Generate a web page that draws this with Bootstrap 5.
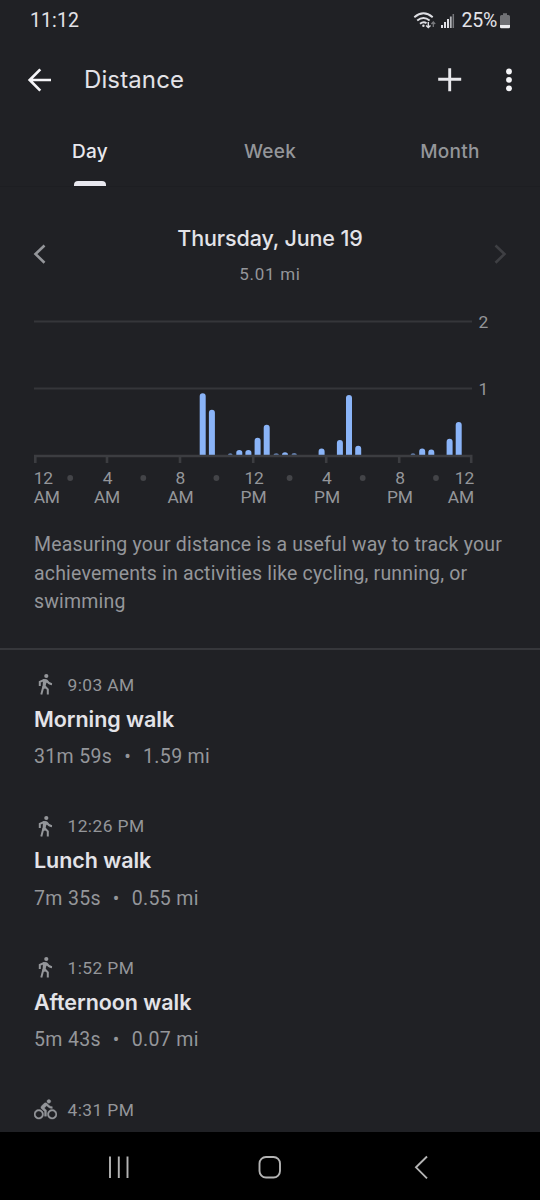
<!DOCTYPE html>
<html lang="en" data-bs-theme="dark">
<head>
<meta charset="utf-8">
<meta name="viewport" content="width=device-width, initial-scale=1">
<title>Distance</title>
<link href="https://cdn.jsdelivr.net/npm/bootstrap@5.3.0/dist/css/bootstrap.min.css" rel="stylesheet">
<style>
  body { background: #202125; color: #e3e3e8; font-family: Roboto, "Liberation Sans", sans-serif; height: 1200px; overflow: hidden; }
  svg { display: block; flex: none; }
  .gs { font-family: Inter, "Open Sans", sans-serif; white-space: nowrap; }
  .dim { color: #94969a; }
  .status-bar { height: 41px; padding: 0 29px 0 30px; font-size: 19.5px; }
  .status-time { letter-spacing: .1px; }
  .status-pct { margin-left: 4px; letter-spacing: -.2px; }
  .app-bar { height: 77px; padding: 0 24px 0 27px; }
  .app-title { font-size: 24px; letter-spacing: .12px; margin-left: 32px; line-height: 32px; }
  .tabs { height: 69px; border-bottom: 1px solid #1d1e22; }
  .tabs .nav-link { color: #94969a; font-size: 19px; font-weight: 500; padding: 21px 0 0; height: 68px; line-height: 26px; letter-spacing: .25px; }
  .tabs .nav-link.active { color: #e8e8ed; }
  .tab-mark { width: 32px; height: 5px; border-radius: 4px 4px 0 0; background: #e8e8ef; margin: 16px auto 0; }
  .day-picker { height: 123px; padding: 37px 33px 0; }
  .day-name { font-size: 21.5px; font-weight: 500; line-height: 28px; letter-spacing: -.13px; }
  .day-total { font-size: 17px; line-height: 22px; margin-top: 11px; letter-spacing: .7px; }
  .chart text { font-family: Roboto, sans-serif; font-size: 17.400px; letter-spacing: -.2px; fill: #94969a; }
  .about { font-size: 19.5px; line-height: 28.5px; letter-spacing: .18px; padding: 21px 30px 0 34px; height: 140px; border-bottom: 2px solid #36373b; white-space: nowrap; }
  .entry { height: 141.7px; padding: 22.5px 34px 0; }
  .entry-time { font-size: 17.400px; line-height: 24px; letter-spacing: .4px; }
  .entry-title { font-size: 21.5px; font-weight: 600; line-height: 28px; margin-top: 8px; letter-spacing: -.05px; }
  .entry-info { font-size: 19.5px; line-height: 26px; margin-top: 11.500px; letter-spacing: .33px; }
  .entry-list { height: 482px; overflow: hidden; }
  .entry-icon { width: 33.5px; }
  .phone-nav { height: 68px; background: #000; }
</style>
</head>
<body>
<svg width="0" height="0" class="position-absolute">
  <symbol id="walk" viewBox="0 0 23 23"><g fill="none" stroke="#94969a" stroke-width="2"><circle cx="12.300" cy="3" r="2.100" fill="#94969a" stroke="none"/><path fill="#94969a" stroke="none" d="M9 6.300q2.300-.9 4.200.2l.9 2.300-1.800 1.200-.8 3.500 1.500 1.800-4.500.6z"/><path d="M10 7 5.800 8.900v4M12.800 7.500q1.700 3.300 5.200 3.700M9.500 13 7.300 21.500M10.800 13.300l3 3v5.200"/></g></symbol>
  <symbol id="bike" viewBox="0 0 24 24"><path fill="#94969a" stroke="#94969a" stroke-width=".4" d="M15.500 5.500c1.100 0 2-.9 2-2s-.9-2-2-2-2 .9-2 2 .9 2 2 2zM5 12c-2.800 0-5 2.200-5 5s2.200 5 5 5 5-2.200 5-5-2.200-5-5-5zm0 8.500c-1.900 0-3.500-1.600-3.500-3.500s1.600-3.500 3.500-3.500 3.500 1.600 3.500 3.500-1.600 3.500-3.500 3.500zm5.800-10 2.400-2.400.8.800c1.300 1.300 3 2.100 5.100 2.100V9c-1.500 0-2.700-.6-3.600-1.500l-1.900-1.900c-.5-.4-1-.6-1.600-.6s-1.100.2-1.400.6L7.800 8.400c-.4.4-.6.9-.6 1.400 0 .6.200 1.100.6 1.400L11 14v5h2v-6.200l-2.200-2.300zM19 12c-2.800 0-5 2.200-5 5s2.200 5 5 5 5-2.200 5-5-2.200-5-5-5zm0 8.500c-1.900 0-3.500-1.600-3.500-3.500s1.600-3.500 3.500-3.500 3.500 1.600 3.500 3.500-1.600 3.500-3.500 3.500z"/></symbol>
</svg>

<div class="status-bar d-flex align-items-center">
  <span class="status-time">11:12</span>
  <svg class="ms-auto" width="44" height="24" viewBox="412 8 44 24" fill="none" stroke="#dedee3">
    <path d="M413.300 16.200q9.200-7.800 18.400 0M416.200 19.600q6.300-5.100 12.400 0M419 22.700q3.500-2.500 6.500-.5" stroke-width="1.900"/>
    <circle cx="422.400" cy="24.700" r="1.200" fill="#dedee3" stroke="none"/>
    <path d="M427.300 21v5.500m-2.200-2.100 2.200 2.200 2.200-2.200" stroke-width="1.400"/>
    <path d="M432.300 26v-5m-1.900 2 1.900-2 1.900 2" stroke="#77787c" stroke-width="1.300"/>
    <path d="M441 27v-3M444 27v-6M447 27v-9" stroke-width="2"/><path d="M449.800 27V15.500" stroke="#b4b5b9" stroke-width="1.800"/><path d="M452.300 27V13" stroke="#77787c" stroke-width="1.500"/>
  </svg>
  <span class="status-pct">25%</span>
  <svg width="12" height="18" viewBox="0 0 12 18" style="margin-left:2px"><path fill="#707175" d="M1 4.500Q1 3 2.500 3H4V1.200h4V3h1.500Q11 3 11 4.500V13H1z"/><path fill="#ededf0" d="M1 13h10v2q0 1.300-1.300 1.300H2.300Q1 16.300 1 15z"/></svg>
</div>

<header class="app-bar d-flex align-items-center">
  <svg width="25" height="26" viewBox="0 0 25 26" fill="none" stroke="#f5f5f8" stroke-width="2.700"><path d="M24 13H3M13.300 2.400 2.700 13l10.600 10.600"/></svg>
  <div class="app-title gs">Distance</div>
  <svg class="ms-auto" width="24" height="24" viewBox="0 0 24 24" stroke="#e8e8ec" stroke-width="2.900"><path d="M11.700 .3v23M.2 11.200h23"/></svg>
  <svg width="14" height="26" viewBox="0 0 14 26" fill="#f5f5f8" style="margin-left:40px"><circle cx="7" cy="4.500" r="2.900"/><circle cx="7" cy="12.800" r="2.900"/><circle cx="7" cy="21.300" r="2.900"/></svg>
</header>

<nav class="tabs nav nav-fill row g-0 text-center">
  <a class="nav-link active gs col-4">Day<div class="tab-mark"></div></a>
  <a class="nav-link gs col-4">Week</a>
  <a class="nav-link gs col-4">Month</a>
</nav>

<section class="day-picker d-flex justify-content-between">
  <svg class="mt-3" width="14" height="28" viewBox="0 0 14 28" fill="none" stroke="#94969a" stroke-width="2.600"><path d="M11.500 5.500 2.500 14l9 8.800"/></svg>
  <div class="text-center">
    <div class="day-name gs">Thursday, June 19</div>
    <div class="day-total dim">5.01 mi</div>
  </div>
  <svg class="mt-3" width="14" height="28" viewBox="0 0 14 28" fill="none" stroke="#3e3f43" stroke-width="2.600"><path d="m2.500 5.500 9 8.500-9 8.800"/></svg>
</section>

<svg class="chart" width="540" height="200" viewBox="0 310 540 200">
  <g stroke="#35363a" stroke-width="1.800"><path d="M34 321.500h438M34 388.500h438"/></g>
  <!-- half-hour bars -->
  <g fill="#8ab4f8">
    <path d="M199.700 455v-58.700a3 3 0 0 1 6 0V455zM208.900 455v-42.200a3 3 0 0 1 6 0V455z"/>
    <path d="M236.300 455v-2.500a3 2.600 0 0 1 6 0v2.500zM245.400 455v-2.500a3 2.600 0 0 1 6 0v2.500zM254.600 455v-14.200a3 3 0 0 1 6 0V455zM263.700 455v-27.200a3 3 0 0 1 6 0V455z"/>
    <path d="M318.600 455v-3.500a3 3 0 0 1 6 0v3.500zM336.900 455v-12a3 3 0 0 1 6 0v12zM346 455v-57a3 3 0 0 1 6 0v57zM355.200 455v-6.300a3 3 0 0 1 6 0v6.300z"/>
    <path d="M419.200 455v-3.500a3 3 0 0 1 6 0v3.500zM428.300 455v-2.500a3 3 0 0 1 6 0v2.500zM446.600 455v-13.200a3 3 0 0 1 6 0V455zM455.700 455v-30a3 3 0 0 1 6 0v30z"/>
    <path d="M282 455q0-2.700 3-2.700t3 2.700z"/>
    <path opacity=".65" d="M228 455q0-1.700 2.300-1.700t2.300 1.700zM273.500 455q0-1.700 2.700-1.700t2.700 1.700zM291.500 455q0-2 2.700-2t2.700 2zM410.600 455q0-1.700 2.400-1.700t2.400 1.700z"/>
  </g>
  <g fill="none" stroke="#3c3d41" stroke-width="2.600"><path d="M35.300 463v-7h435.900v7M107 456v7M180 456v7M253.200 456v7M326.200 456v7M399.200 456v7"/></g>
  <g fill="#434448"><circle cx="70.200" cy="478" r="2.900"/><circle cx="143.300" cy="478" r="2.900"/><circle cx="216.400" cy="478" r="2.900"/><circle cx="289.600" cy="478" r="2.900"/><circle cx="362.700" cy="478" r="2.900"/><circle cx="436" cy="478" r="2.900"/></g>
  <text x="478.500" y="328">2</text><text x="478.500" y="395">1</text>
  <text x="33.700" y="484">12</text><text x="33.700" y="503">AM</text>
  <g text-anchor="middle">
    <text x="107.500" y="484">4</text><text x="107" y="503">AM</text>
    <text x="180.300" y="484">8</text><text x="180.500" y="503">AM</text>
    <text x="254" y="484">12</text><text x="253.500" y="503">PM</text>
    <text x="326.700" y="484">4</text><text x="327" y="503">PM</text>
    <text x="400" y="484">8</text><text x="399.800" y="503">PM</text>
  </g>
  <g text-anchor="end"><text x="474" y="484">12</text><text x="474" y="503">AM</text></g>
</svg>

<p class="about dim m-0">Measuring your distance is a useful way to track your<br>achievements in activities like cycling, running, or<br>swimming</p>

<main class="entry-list">
  <article class="entry">
    <div class="entry-time dim d-flex align-items-center"><div class="entry-icon"><svg width="23" height="23"><use href="#walk"/></svg></div>9:03 AM</div>
    <div class="entry-title gs">Morning walk</div>
    <div class="entry-info dim d-flex"><span>31m 59s</span><span class="mx-2 px-1">•</span><span>1.59 mi</span></div>
  </article>
  <article class="entry">
    <div class="entry-time dim d-flex align-items-center"><div class="entry-icon"><svg width="23" height="23"><use href="#walk"/></svg></div>12:26 PM</div>
    <div class="entry-title gs">Lunch walk</div>
    <div class="entry-info dim d-flex"><span>7m 35s</span><span class="mx-2 px-1">•</span><span>0.55 mi</span></div>
  </article>
  <article class="entry">
    <div class="entry-time dim d-flex align-items-center"><div class="entry-icon"><svg width="23" height="23"><use href="#walk"/></svg></div>1:52 PM</div>
    <div class="entry-title gs">Afternoon walk</div>
    <div class="entry-info dim d-flex"><span>5m 43s</span><span class="mx-2 px-1">•</span><span>0.07 mi</span></div>
  </article>
  <article class="entry">
    <div class="entry-time dim d-flex align-items-center"><div class="entry-icon"><svg width="23" height="23"><use href="#bike"/></svg></div>4:31 PM</div>
  </article>
</main>

<footer class="phone-nav">
  <svg width="540" height="68" viewBox="0 0 540 68" fill="none" stroke="#b4b4b4" stroke-width="1.900">
    <path d="M110 24.500v21.500M118.800 24.500v21.500M127.500 24.500v21.500"/>
    <rect x="259.500" y="25" width="20.500" height="20.500" rx="6.500"/>
    <path d="M427 24.500 416 35.300l11 11"/>
  </svg>
</footer>
<script src="https://cdn.jsdelivr.net/npm/bootstrap@5.3.0/dist/js/bootstrap.bundle.min.js"></script>
</body>
</html>
